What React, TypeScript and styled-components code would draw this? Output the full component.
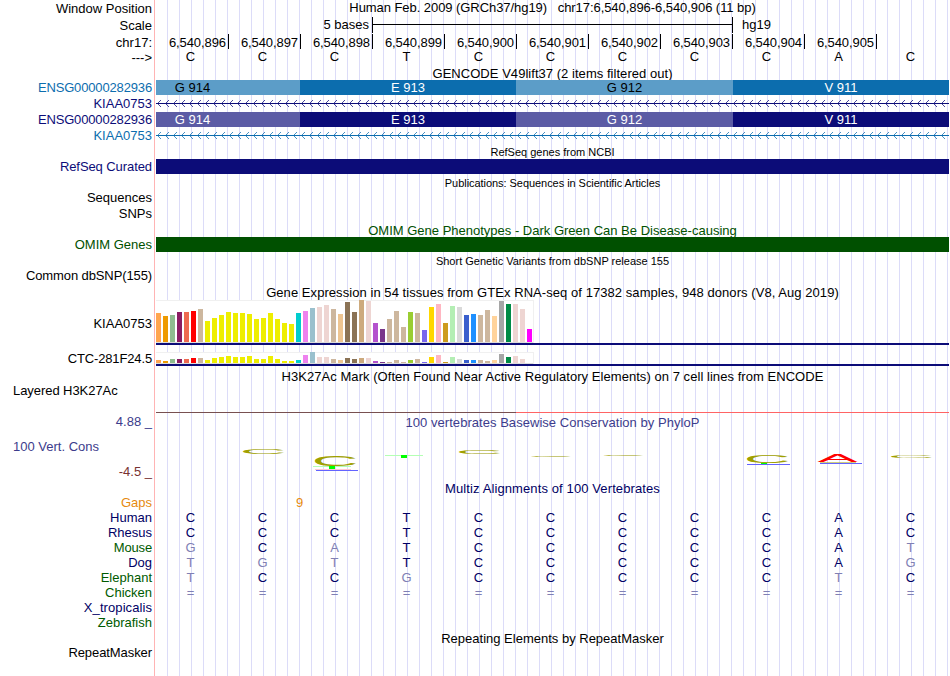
import styled, { createGlobalStyle } from 'styled-components'

const GlobalStyle = createGlobalStyle`
  body {
    margin: 0;
    background: #fff;
  }
`

const NAVY = '#0c0c78'
const BLUE = '#0c6dae'
const OLIVE = '#a0a000'

// Styled components
const Browser = styled.div`
  display: flex;
  width: 950px;
  height: 676px;
  overflow: hidden;
  background: #fff;
  color: #000;
  font-family: 'Liberation Sans', Arial, sans-serif;
  font-size: 13px;
  line-height: 15px;
  white-space: pre;
`

const LabelColumn = styled.div`
  display: flex;
  flex-direction: column;
  box-sizing: border-box;
  width: 155px;
  padding: 1px 2px 0 13px;
  border-right: 1px solid #ffb4b4;
`

const Label = styled.div<{ $gap?: number; $color?: string; $left?: boolean; $spacing?: number }>`
  flex: none;
  height: 15px;
  margin-top: ${(props) => props.$gap || 0}px;
  color: ${(props) => props.$color || '#000'};
  text-align: ${(props) => (props.$left ? 'left' : 'right')};
  letter-spacing: ${(props) => props.$spacing || 0}px;
`

const TrackColumn = styled.div`
  display: flex;
  flex-direction: column;
  width: 793px;
  margin-left: 1px;
  background: repeating-linear-gradient(to right, transparent 0 11px, #dcdcf8 11px 12px);
`

const Title = styled.div<{ $gap?: number; $color?: string; $height?: number; $spacing?: number }>`
  flex: none;
  height: ${(props) => props.$height || 15}px;
  margin-top: ${(props) => props.$gap || 0}px;
  color: ${(props) => props.$color || '#000'};
  text-align: center;
  letter-spacing: ${(props) => props.$spacing || 0}px;
`

const SmallTitle = styled(Title)`
  font-size: 11px;
  line-height: 14px;
`

const ScaleRow = styled.div`
  display: flex;
  height: 16px;
  margin-top: 2px;
`

const ScaleText = styled.div`
  box-sizing: border-box;
  width: 216px;
  padding-right: 3px;
  text-align: right;
`

const ScaleBar = styled.div`
  display: flex;
  align-items: center;
  box-sizing: border-box;
  width: 361px;
  margin-right: 9px;
  border: solid #000;
  border-width: 0 1px;

  &::before {
    content: '';
    flex: 1;
    height: 1px;
    margin-bottom: 1px;
    background: #000;
  }
`

const BaseGrid = styled.div<{ $height?: number }>`
  display: grid;
  flex: none;
  grid-template-columns: repeat(11, 72px);
  height: ${(props) => props.$height || 15}px;
`

const Position = styled.div`
  box-sizing: border-box;
  width: 73px;
  height: 15px;
  margin-top: 1px;
  padding: 1px 2px 0 0;
  border-right: 1px solid #000;
  letter-spacing: -0.08px;
  text-align: right;
`

const Base = styled.div<{ $color?: string }>`
  padding-right: 3px;
  color: ${(props) => props.$color || '#000'};
  text-align: center;
`

const CodonRow = styled.div`
  display: grid;
  flex: none;
  grid-template-columns: 144px 216px 217px 216px;
  height: 15px;
`

const Codon = styled.div<{ $bg: string; $dark?: boolean; $clipped?: boolean }>`
  box-sizing: border-box;
  padding-right: ${(props) => (props.$clipped ? 71 : 0)}px;
  background: ${(props) => props.$bg};
  color: ${(props) => (props.$dark ? '#000' : '#fff')};
  text-align: center;
`

const Intron = styled.svg`
  display: block;
  flex: none;
`

const Feature = styled.div<{ $color: string }>`
  flex: none;
  height: 15px;
  background: ${(props) => props.$color};
`

const Expression = styled.div<{ $height: number; $gap?: number }>`
  display: flex;
  align-items: flex-end;
  gap: 2px;
  box-sizing: border-box;
  flex: none;
  width: 378px;
  height: ${(props) => props.$height}px;
  margin-top: ${(props) => props.$gap || 0}px;
  border: solid #f0f0f0;
  border-width: 1px 1px 0 0;
  background: linear-gradient(#dcdcdc, #dcdcdc) bottom / 100% 1px no-repeat #fff;
`

const Tissue = styled.div<{ $color: string }>`
  flex: none;
  width: 5px;
  margin-bottom: 1px;
  background: ${(props) => props.$color};
`

const GeneLine = styled.div`
  flex: none;
  height: 2px;
  background: ${NAVY};
`

const AcetylLine = styled.div`
  flex: none;
  height: 1px;
  margin-top: 28px;
  background: linear-gradient(to right, #785050 360px, #ff6464 360px);
`

const Conservation = styled.svg`
  display: block;
  flex: none;
`

const GapRow = styled.div`
  box-sizing: border-box;
  flex: none;
  height: 15px;
  padding-left: 140px;
  color: #e68a0e;
`

const labels = [
  { text: 'Window Position' },
  { text: 'Scale', gap: 2 },
  { text: 'chr17:', gap: 2 },
  { text: '--->' },
  { text: 'ENSG00000282936', gap: 15, color: BLUE, spacing: -0.15 },
  { text: 'KIAA0753', gap: 1, color: NAVY },
  { text: 'ENSG00000282936', gap: 1, color: NAVY, spacing: -0.15 },
  { text: 'KIAA0753', gap: 1, color: BLUE },
  { text: 'RefSeq Curated', gap: 16, color: NAVY, spacing: -0.08 },
  { text: 'Sequences', gap: 16 },
  { text: 'SNPs', gap: 1 },
  { text: 'OMIM Genes', gap: 16, color: '#005000' },
  { text: 'Common dbSNP(155)', gap: 16, spacing: -0.11 },
  { text: 'KIAA0753', gap: 33 },
  { text: 'CTC-281F24.5', gap: 20, spacing: -0.14 },
  { text: 'Layered H3K27Ac', gap: 17, left: true, spacing: -0.06 },
  { text: '4.88 _', gap: 16, color: '#3c3c8c' },
  { text: '100 Vert. Cons', gap: 10, color: '#3c3c8c', left: true },
  { text: '-4.5 _', gap: 10, color: '#783232' },
  { text: 'Gaps', gap: 16, color: '#e68a0e' },
  { text: 'Human', color: '#000064' },
  { text: 'Rhesus', color: '#000064' },
  { text: 'Mouse', color: '#005a00', spacing: -0.15 },
  { text: 'Dog', color: '#000064' },
  { text: 'Elephant', color: '#005a00' },
  { text: 'Chicken', color: '#005a00' },
  { text: 'X_tropicalis', color: '#000064', spacing: 0.08 },
  { text: 'Zebrafish', color: '#005a00' },
  { text: 'RepeatMasker', gap: 15, spacing: -0.08 },
]

const positions = Array.from({ length: 10 }, (_, i) => `6,540,${896 + i}`)

const reference = 'CCCTCCCCCAC'

const alignments = [
  'CCCTCCCCCAC',
  'CCCTCCCCCAC',
  'GCATCCCCCAT',
  'TGTTCCCCCAG',
  'TCCGCCCCCTC',
  '===========',
]

// GTEx tissue colors, in track order
const tissueColors = [
  '#ffa54f', '#ee9a00', '#8fbc8f', '#8b1c62', '#ee6a50', '#ff0000', '#cdb79e',
  ...Array(13).fill('#eeee00'),
  '#00cdcd', '#ee82ee', '#9ac0cd', '#eed5d2', '#eed5d2', '#cdb79e', '#eec591',
  '#8b7355', '#8b7355', '#cdaa7d', '#eed5d2', '#b452cd', '#7a378b', '#cdb79e',
  '#cdb79e', '#cdb79e', '#9acd32', '#cdb79e', '#7a67ee', '#ffd700', '#ffb6c1',
  '#cd9b1d', '#b4eeb4', '#d9d9d9', '#3a5fcd', '#1e90ff', '#cdb79e', '#cdb79e',
  '#ffd39b', '#a6a6a6', '#008b45', '#eed5d2', '#eed5d2', '#ff00ff',
]

const kiaaLevels = [
  29, 26, 27, 30, 30, 31, 33, 21, 24, 27, 30, 29, 29, 28, 23, 24, 29, 23, 19, 18,
  29, 31, 34, 35, 37, 33, 28, 40, 30, 42, 41, 19, 13, 23, 31, 15, 30, 29, 12, 35,
  38, 19, 36, 35, 27, 28, 27, 32, 26, 41, 38, 38, 33, 13,
]

const ctcLevels = [
  3, 2, 4, 4, 4, 5, 5, 3, 5, 6, 7, 6, 6, 7, 4, 4, 7, 4, 2, 2,
  3, 8, 11, 6, 6, 4, 3, 5, 4, 5, 5, 2, 1, 1, 3, 1, 3, 4, 1, 6,
  8, 1, 6, 4, 3, 3, 3, 2, 3, 9, 6, 7, 4, 0,
]

// One chevron every 8px, pointing to the minus strand
const chevrons = Array.from({ length: 99 }, (_, i) => {
  const x = 1 + i * 8
  return [[0, 0], [1, -1], [1, 1], [2, -2], [2, 2], [3, -3], [3, 3]]
    .map(([dx, dy]) => `M${x + dx} ${8 + dy}h1v1h-1z`)
    .join('')
}).join('')

function IntronLine({ color, height }: { color: string; height: number }) {
  return (
    <Intron width="793" height={height} shapeRendering="crispEdges" fill={color}>
      <rect x="0" y="8" width="793" height="1" />
      <path d={chevrons} opacity="0.75" />
    </Intron>
  )
}

function ExpressionGraph({ levels, height, gap }: { levels: number[]; height: number; gap?: number }) {
  return (
    <>
      <Expression $height={height} $gap={gap}>
        {levels.map((level, i) => (
          <Tissue key={i} $color={tissueColors[i]} style={{ height: level }} />
        ))}
      </Expression>
      <GeneLine />
    </>
  )
}

// Ink boxes of the logo letters at font-size 100: left, right, top, bottom
const ink: Record<string, number[]> = {
  C: [5, 68.5, -70, 1],
  A: [0, 66.5, -69, 0],
}

interface LogoLetterProps {
  letter: string
  x: number
  y: number
  width: number
  height: number
  color: string
}

function LogoLetter({ letter, x, y, width, height, color }: LogoLetterProps) {
  const [left, right, top, bottom] = ink[letter]
  const sx = width / (right - left)
  const sy = height / (bottom - top)
  return (
    <text
      fontSize="100"
      fill={color}
      transform={`translate(${x - left * sx} ${y - top * sy}) scale(${sx} ${sy})`}
    >
      {letter}
    </text>
  )
}

function ConservationLogo() {
  return (
    <Conservation width="793" height="51">
      <LogoLetter letter="C" x={87} y={18.7} width={41} height={5.2} color={OLIVE} />

      <LogoLetter letter="C" x={159} y={25} width={41} height={11} color={OLIVE} />
      <rect x="157" y="36" width="38" height="1" fill="#b4ffb4" />
      <rect x="173" y="36" width="6" height="3" fill="#00ff00" />
      <rect x="159" y="39" width="36" height="1" fill="#ffc8d2" />
      <rect x="160" y="40" width="42" height="1" fill="#6464ff" />

      <rect x="229" y="25" width="38" height="1" fill="#b4ffb4" />
      <rect x="245" y="25" width="6" height="3" fill="#00ff00" />

      <LogoLetter letter="C" x={303} y={19.8} width={41} height={4.2} color={OLIVE} />
      <LogoLetter letter="C" x={375.5} y={25.2} width={40} height={1.8} color={OLIVE} />
      <LogoLetter letter="C" x={447.5} y={25} width={40} height={1} color={OLIVE} />

      <LogoLetter letter="C" x={591} y={25} width={41} height={7.8} color={OLIVE} />
      <rect x="605" y="33" width="6" height="1" fill="#00ff00" />
      <rect x="591" y="34" width="43" height="1" fill="#6464ff" />

      <LogoLetter letter="A" x={661.5} y={25} width={40} height={7.4} color="#ff0000" />
      <rect x="664" y="32" width="36" height="1" fill="#a0a000" opacity="0.5" />
      <rect x="664" y="33" width="42" height="1" fill="#6464ff" />

      <LogoLetter letter="C" x={735} y={25} width={41} height={3} color={OLIVE} />
    </Conservation>
  )
}

// Main App component
function App() {
  return (
    <Browser>
      <GlobalStyle />

      <LabelColumn>
        {labels.map((label, i) => (
          <Label key={i} $gap={label.gap} $color={label.color} $left={label.left} $spacing={label.spacing}>
            {label.text}
          </Label>
        ))}
      </LabelColumn>

      <TrackColumn>
        <Title $spacing={-0.06}>
          {'Human Feb. 2009 (GRCh37/hg19)   chr17:6,540,896-6,540,906 (11 bp)'}
        </Title>
        <ScaleRow>
          <ScaleText>5 bases</ScaleText>
          <ScaleBar />
          <div>hg19</div>
        </ScaleRow>
        <BaseGrid $height={16}>
          {positions.map((position) => (
            <Position key={position}>{position}</Position>
          ))}
        </BaseGrid>
        <BaseGrid $height={17}>
          {reference.split('').map((base, i) => (
            <Base key={i}>{base}</Base>
          ))}
        </BaseGrid>

        {/* GENCODE */}
        <Title $height={14} $spacing={0.04}>GENCODE V49lift37 (2 items filtered out)</Title>
        <CodonRow>
          <Codon $bg="#5c9dc8" $dark $clipped>G 914</Codon>
          <Codon $bg={BLUE}>E 913</Codon>
          <Codon $bg="#5c9dc8" $dark>G 912</Codon>
          <Codon $bg={BLUE}>V 911</Codon>
        </CodonRow>
        <IntronLine color={NAVY} height={17} />
        <CodonRow>
          <Codon $bg="#5c5ca5" $clipped>G 914</Codon>
          <Codon $bg={NAVY}>E 913</Codon>
          <Codon $bg="#5c5ca5">G 912</Codon>
          <Codon $bg={NAVY}>V 911</Codon>
        </CodonRow>
        <IntronLine color={BLUE} height={18} />

        {/* Gene and variant tracks */}
        <SmallTitle $height={14}>RefSeq genes from NCBI</SmallTitle>
        <Feature $color={NAVY} />
        <SmallTitle $gap={2} $height={14} $spacing={-0.05}>
          Publications: Sequences in Scientific Articles
        </SmallTitle>
        <Title $gap={33} $height={14} $color="#005000">
          OMIM Gene Phenotypes - Dark Green Can Be Disease-causing
        </Title>
        <Feature $color="#005000" />
        <SmallTitle $gap={2} $height={14}>Short Genetic Variants from dbSNP release 155</SmallTitle>

        {/* GTEx */}
        <Title $gap={17} $spacing={0.06}>
          Gene Expression in 54 tissues from GTEx RNA-seq of 17382 samples, 948 donors (V8, Aug 2019)
        </Title>
        <ExpressionGraph levels={kiaaLevels} height={43} />
        <ExpressionGraph levels={ctcLevels} height={12} gap={7} />

        {/* Regulation and conservation */}
        <Title $gap={3} $spacing={0.05}>
          H3K27Ac Mark (Often Found Near Active Regulatory Elements) on 7 cell lines from ENCODE
        </Title>
        <AcetylLine />
        <Title $gap={2} $color="#3c3c8c" $spacing={0.04}>
          100 vertebrates Basewise Conservation by PhyloP
        </Title>
        <ConservationLogo />
        <Title $height={14} $color="#000064" $spacing={0.11}>Multiz Alignments of 100 Vertebrates</Title>
        <GapRow>9</GapRow>
        {alignments.map((sequence, row) => (
          <BaseGrid key={row}>
            {sequence.split('').map((base, i) => (
              <Base key={i} $color={base === reference[i] ? '#000064' : '#8080b4'}>{base}</Base>
            ))}
          </BaseGrid>
        ))}
        <Title $gap={31}>Repeating Elements by RepeatMasker</Title>
      </TrackColumn>
    </Browser>
  )
}

export default App
